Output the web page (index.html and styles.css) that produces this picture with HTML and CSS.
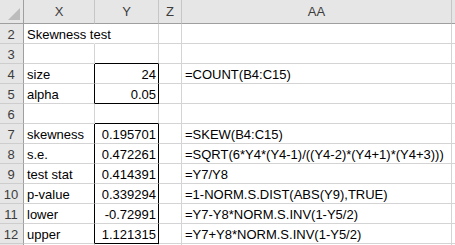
FILE: index.html
```html
<!DOCTYPE html>
<html>
<head>
<meta charset="utf-8">
<link rel="stylesheet" href="styles.css">
</head>
<body>
<div class="sheet">
  <!-- column headings -->
  <div class="corner"><svg width="23" height="23" viewBox="0 0 23 23"><polygon points="20,8 20,20 8,20" fill="#bcbcbc"/></svg></div>
  <div class="colhead">X</div>
  <div class="colhead">Y</div>
  <div class="colhead">Z</div>
  <div class="colhead">AA</div>
  <div class="colhead"></div>

  <div class="rowhead">2</div>
  <div class="cell spill">Skewness test</div>
  <div class="cell"></div>
  <div class="cell"></div>
  <div class="cell"></div>
  <div class="cell"></div>

  <div class="rowhead">3</div>
  <div class="cell"></div>
  <div class="cell box-top"></div>
  <div class="cell"></div>
  <div class="cell"></div>
  <div class="cell"></div>

  <div class="rowhead">4</div>
  <div class="cell box-left">size</div>
  <div class="cell num box-right">24</div>
  <div class="cell"></div>
  <div class="cell">=COUNT(B4:C15)</div>
  <div class="cell"></div>

  <div class="rowhead">5</div>
  <div class="cell box-left">alpha</div>
  <div class="cell num box-right box-bottom">0.05</div>
  <div class="cell"></div>
  <div class="cell"></div>
  <div class="cell"></div>

  <div class="rowhead">6</div>
  <div class="cell"></div>
  <div class="cell box-bottom"></div>
  <div class="cell"></div>
  <div class="cell"></div>
  <div class="cell"></div>

  <div class="rowhead">7</div>
  <div class="cell box-left">skewness</div>
  <div class="cell num box-right">0.195701</div>
  <div class="cell"></div>
  <div class="cell">=SKEW(B4:C15)</div>
  <div class="cell"></div>

  <div class="rowhead">8</div>
  <div class="cell box-left">s.e.</div>
  <div class="cell num box-right">0.472261</div>
  <div class="cell"></div>
  <div class="cell">=SQRT(6*Y4*(Y4-1)/((Y4-2)*(Y4+1)*(Y4+3)))</div>
  <div class="cell"></div>

  <div class="rowhead">9</div>
  <div class="cell box-left">test stat</div>
  <div class="cell num box-right">0.414391</div>
  <div class="cell"></div>
  <div class="cell">=Y7/Y8</div>
  <div class="cell"></div>

  <div class="rowhead">10</div>
  <div class="cell box-left">p-value</div>
  <div class="cell num box-right">0.339294</div>
  <div class="cell"></div>
  <div class="cell">=1-NORM.S.DIST(ABS(Y9),TRUE)</div>
  <div class="cell"></div>

  <div class="rowhead">11</div>
  <div class="cell box-left">lower</div>
  <div class="cell num box-right">-0.72991</div>
  <div class="cell"></div>
  <div class="cell">=Y7-Y8*NORM.S.INV(1-Y5/2)</div>
  <div class="cell"></div>

  <div class="rowhead">12</div>
  <div class="cell box-left">upper</div>
  <div class="cell num box-right box-bottom">1.121315</div>
  <div class="cell"></div>
  <div class="cell">=Y7+Y8*NORM.S.INV(1-Y5/2)</div>
  <div class="cell"></div>

  <!-- next row, only its top edge is in view -->
  <div class="rowhead"></div>
  <div class="cell"></div>
  <div class="cell"></div>
  <div class="cell"></div>
  <div class="cell"></div>
  <div class="cell"></div>
</div>
</body>
</html>
```

FILE: styles.css
```css
html, body {
  margin: 0;
  padding: 0;
  background: #ffffff;
  overflow: hidden;
}

.sheet {
  display: grid;
  grid-template-columns: 24px 71px 64px 23px 270px 20px;
  grid-template-rows: 24px repeat(12, 20px);
  font-family: "Liberation Sans", Arial, sans-serif;
  font-size: 13px;
  color: #000000;
}

.sheet > div {
  box-sizing: border-box;
  white-space: nowrap;
  border-right: 1px solid #d4d4d4;
  border-bottom: 1px solid #d4d4d4;
}

.corner {
  background: #e6e6e6;
  border-right-color: #9f9f9f !important;
  border-bottom-color: #9f9f9f !important;
}

.corner svg {
  display: block;
}

.colhead {
  background: #e6e6e6;
  color: #3c3c3c;
  border-right-color: #c6c6c6 !important;
  border-bottom-color: #9f9f9f !important;
  display: flex;
  align-items: center;
  justify-content: center;
  padding-bottom: 1px;
}

.rowhead {
  background: #e6e6e6;
  color: #3c3c3c;
  border-right-color: #9f9f9f !important;
  border-bottom-color: #cdcdcd !important;
  display: flex;
  align-items: flex-end;
  justify-content: center;
  padding-bottom: 1px;
  padding-right: 1px;
}

.cell {
  display: flex;
  align-items: flex-end;
  padding: 0 2px 1px 3px;
  overflow: visible;
}

.cell.num {
  justify-content: flex-end;
}

.cell.spill {
  border-right-color: transparent !important;
}

.box-top {
  border-bottom-color: #000000 !important;
}

.box-left {
  border-right-color: #000000 !important;
}

.box-right {
  border-right-color: #000000 !important;
}

.box-bottom {
  border-bottom-color: #000000 !important;
}
```
